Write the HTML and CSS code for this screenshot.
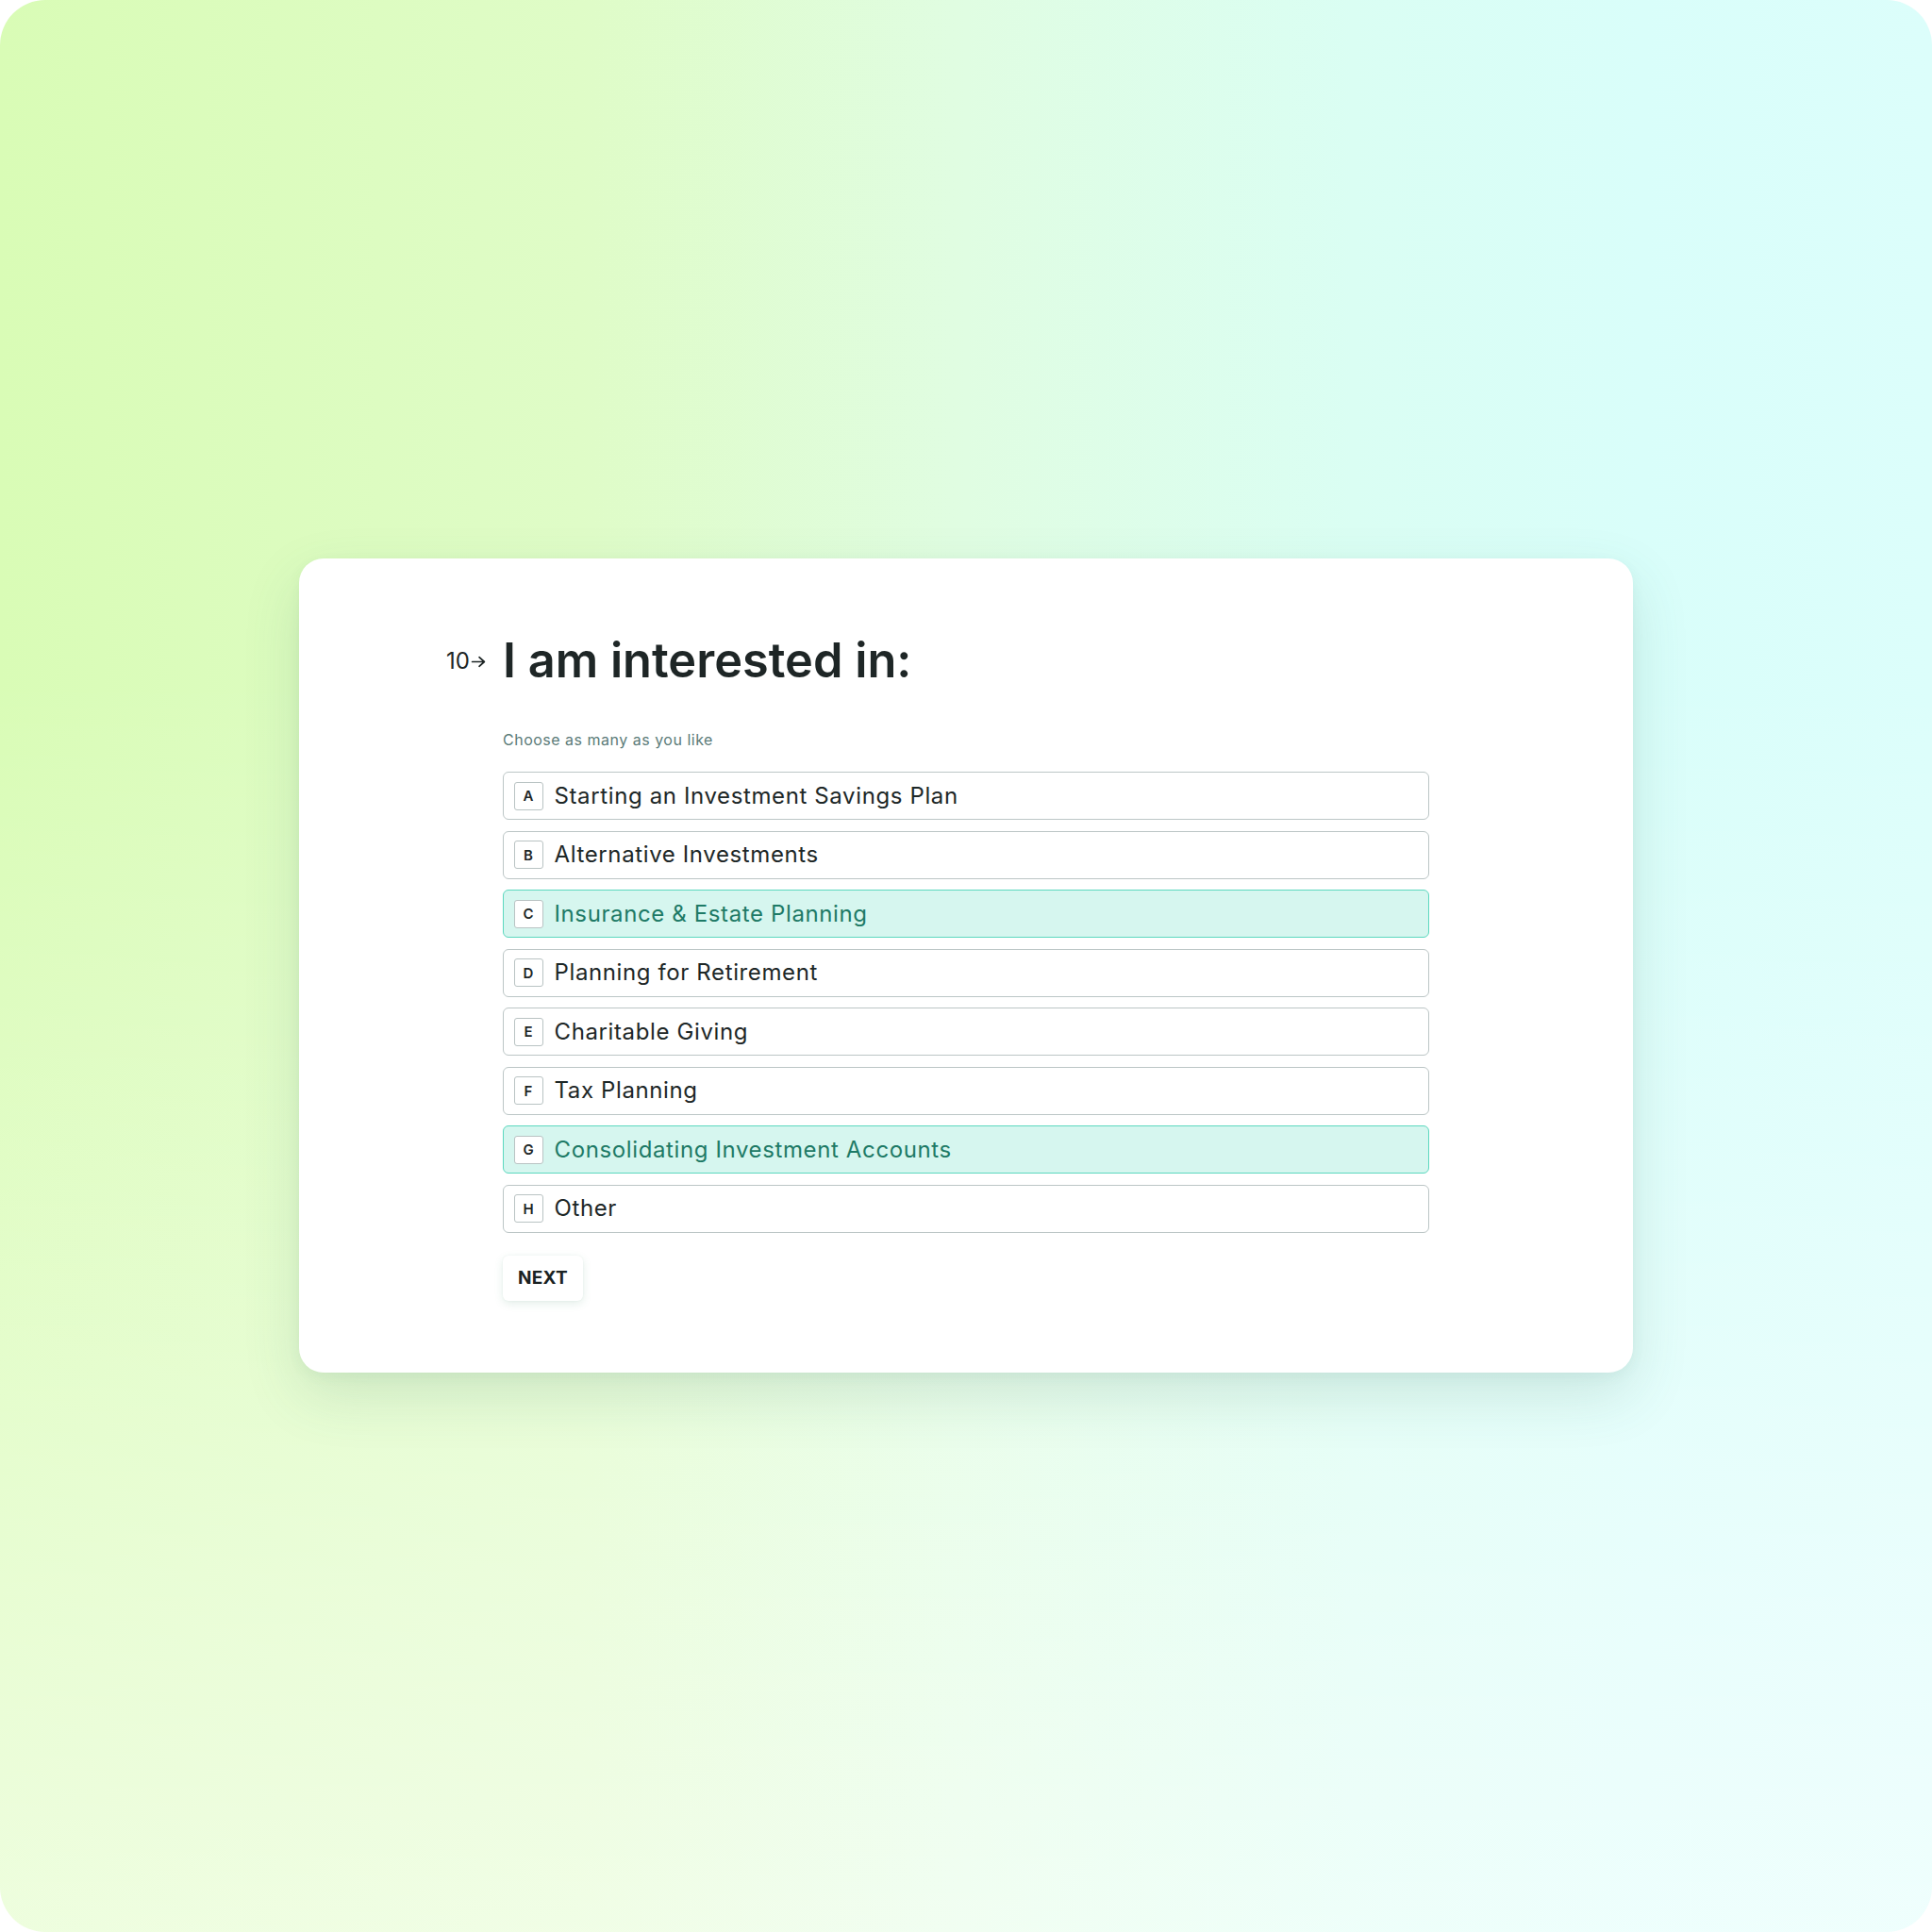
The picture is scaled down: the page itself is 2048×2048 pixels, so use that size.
FILE: index.html
```html
<!DOCTYPE html>
<html lang="en">
<head>
<meta charset="utf-8">
<title>I am interested in</title>
<link rel="stylesheet" href="styles.css">
</head>
<body>
<div class="canvas">
  <div class="card">
    <div class="question">
      <div class="qhead">
        <span class="qnum">10<svg class="qarrow" viewBox="0 0 16 16" width="17" height="17"><path d="M1.5 8h12M8.5 3.5L13.5 8l-5 4.5" fill="none" stroke="#1e2626" stroke-width="1.6" stroke-linecap="round" stroke-linejoin="round"/></svg></span>
        <h1 class="qtitle">I am interested in:</h1>
      </div>
      <p class="hint">Choose as many as you like</p>
      <ul class="options">
        <li class="option"><span class="key">A</span><span class="label">Starting an Investment Savings Plan</span></li>
        <li class="option"><span class="key">B</span><span class="label">Alternative Investments</span></li>
        <li class="option selected"><span class="key">C</span><span class="label">Insurance &amp; Estate Planning</span></li>
        <li class="option"><span class="key">D</span><span class="label">Planning for Retirement</span></li>
        <li class="option"><span class="key">E</span><span class="label">Charitable Giving</span></li>
        <li class="option"><span class="key">F</span><span class="label">Tax Planning</span></li>
        <li class="option selected"><span class="key">G</span><span class="label">Consolidating Investment Accounts</span></li>
        <li class="option"><span class="key">H</span><span class="label">Other</span></li>
      </ul>
      <button class="next">NEXT</button>
    </div>
  </div>
</div>
</body>
</html>
```

FILE: styles.css
```css
html, body {
  margin: 0;
  padding: 0;
  background: #ffffff;
}

body {
  font-family: Inter, "Noto Sans", "Liberation Sans", sans-serif;
}

.canvas {
  width: 2048px;
  height: 2048px;
  box-sizing: border-box;
  border-radius: 48px;
  overflow: hidden;
  padding: 592px 0 0 317px;
  background:
    linear-gradient(180deg, rgba(255,255,255,0) 0%, rgba(255,255,255,0) 35%, rgba(255,255,255,0.55) 100%),
    linear-gradient(90deg, #d9fcb6 0%, #dffcc7 30%, #e0fde2 50%, #dafef3 70%, #d9fefa 85%, #dcfefb 100%);
}

.card {
  width: 1414px;
  box-sizing: border-box;
  background: #ffffff;
  border-radius: 26px;
  padding: 78px 214px 76px 216px;
  box-shadow: 0 24px 60px rgba(60, 120, 100, 0.16), 0 4px 14px rgba(60, 120, 100, 0.06);
}

.question {
  display: flex;
  flex-direction: column;
  align-items: flex-start;
}

.qhead {
  display: flex;
  align-items: center;
  margin-left: -64px;
  gap: 17px;
  height: 60px;
}

.qnum {
  display: flex;
  align-items: center;
  justify-content: flex-end;
  gap: 1px;
  width: 47px;
  font-size: 24px;
  font-weight: 400;
  color: #1e2626;
  line-height: 1;
  margin-top: 2px;
}

.qtitle {
  margin: 0;
  font-size: 50.5px;
  line-height: 60px;
  font-weight: 600;
  color: #1e2626;
  letter-spacing: 0;
}

.hint {
  margin: 42px 0 0 0;
  font-size: 16px;
  line-height: 24px;
  letter-spacing: 0.5px;
  color: #5b7b78;
}

.options {
  list-style: none;
  margin: 22px 0 0 0;
  padding: 0;
  width: 982px;
  display: flex;
  flex-direction: column;
  gap: 11.5px;
}

.option {
  height: 51px;
  box-sizing: border-box;
  border: 1.5px solid #bcc6c6;
  border-radius: 6px;
  background: #ffffff;
  display: flex;
  align-items: center;
  padding-left: 10.5px;
  gap: 12px;
}

.option.selected {
  background: #d6f6ef;
  border-color: #5cd8bf;
}

.key {
  width: 31px;
  height: 30px;
  box-sizing: border-box;
  border: 1.5px solid #b9c3c3;
  border-radius: 3px;
  background: #ffffff;
  display: flex;
  align-items: center;
  justify-content: center;
  font-size: 15px;
  font-weight: 600;
  color: #1e2626;
}

.label {
  font-size: 24px;
  line-height: 30px;
  letter-spacing: 0.62px;
  color: #1d2727;
}

.option.selected .label {
  color: #1e7a66;
}

.next {
  margin-top: 24px;
  height: 48px;
  width: 85px;
  border: none;
  border-radius: 6px;
  background: #ffffff;
  font-family: Inter, "Noto Sans", "Liberation Sans", sans-serif;
  font-size: 19px;
  font-weight: 700;
  color: #1a2222;
  letter-spacing: 0.2px;
  padding: 0;
  box-shadow: 0 3px 10px rgba(60, 140, 100, 0.14), 0 0 2px rgba(60, 140, 100, 0.08);
}
```
